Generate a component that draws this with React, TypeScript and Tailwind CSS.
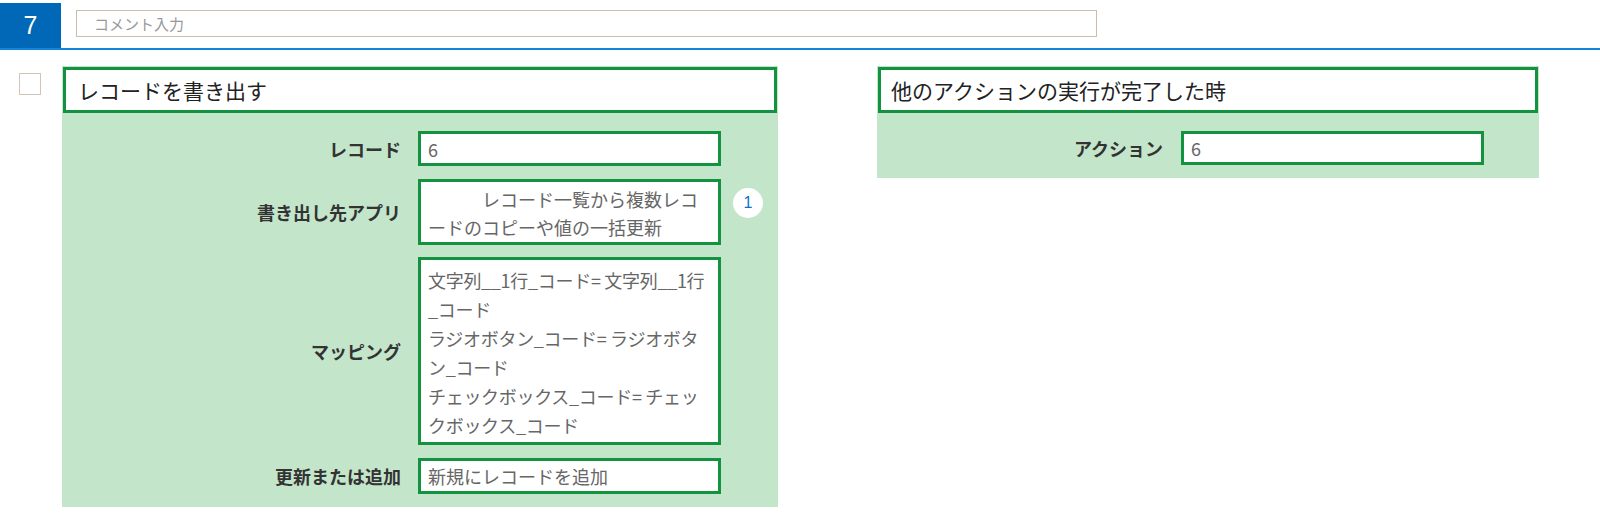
import React from "react";

function Label({ children, w }: { children: React.ReactNode; w: string }) {
  return (
    <div className={`${w} shrink-0 flex items-center justify-end text-[18px] font-bold text-[#333] leading-none`}>
      {children}
    </div>
  );
}

export default function App() {
  return (
    <div className="w-[1600px] h-[513px] bg-white font-['Noto_Sans_CJK_JP','Noto_Sans',sans-serif] text-[#333] overflow-hidden">
      {/* top bar */}
      <div className="flex items-start h-[48px]">
        <div className="mt-[3px] w-[61px] h-[45px] bg-[#0068b6] flex items-center justify-center text-white text-[25px] font-['Liberation_Sans',sans-serif] leading-none">
          7
        </div>
        <div className="ml-[15px] mt-[10px] w-[1021px] h-[27px] border border-[#cbbcab] flex items-center pl-[17px] text-[15px] text-[#999] leading-none">
          コメント入力
        </div>
      </div>
      <div className="h-[2px] bg-[#1384dc]" />

      <div className="flex items-start">
        <div className="ml-[19px] mt-[23px] w-[22px] h-[22px] border border-[#d3c4b3] bg-white shrink-0" />

        {/* left panel */}
        <div className="ml-[21px] mt-[16px] w-[716px] shrink-0 bg-[#c3e6cb] pt-px px-px pb-[13px]">
          <div className="h-[46px] bg-white border-[3px] border-[#13923f] flex items-center pl-[12px] text-[21px] text-[#222] leading-none">
            レコードを書き出す
          </div>
          <div className="mt-[18px] flex flex-col">
            <div className="flex h-[35px]">
              <Label w="w-[338px]">レコード</Label>
              <div className="ml-[17px] w-[303px] bg-white border-[3px] border-[#13923f] px-[7px] flex items-center text-[18px] text-[#666] leading-none">
                6
              </div>
            </div>
            <div className="flex mt-[13px] h-[66px] items-start">
              <Label w="w-[338px] h-full">書き出し先アプリ</Label>
              <div className="ml-[17px] w-[303px] h-full bg-white border-[3px] border-[#13923f] px-[7px] pt-[3px] text-[18px] text-[#666] leading-[28px] whitespace-pre">
                {"\u3000\u3000\u3000レコード一覧から複数レコ\nードのコピーや値の一括更新"}
              </div>
              <div className="ml-[12px] mt-[9px] w-[30px] h-[30px] rounded-full bg-white flex items-center justify-center text-[16px] text-[#0b72cc] font-['Liberation_Sans',sans-serif] leading-none">
                1
              </div>
            </div>
            <div className="flex mt-[12px] h-[188px]">
              <Label w="w-[338px]">マッピング</Label>
              <div className="ml-[17px] w-[303px] bg-white border-[3px] border-[#13923f] px-[7px] pt-[6px] text-[18px] text-[#666] leading-[29px] whitespace-pre overflow-hidden tracking-[-0.3px]">
                {"文字列__1行_コード= 文字列__1行\n_コード\nラジオボタン_コード= ラジオボタ\nン_コード\nチェックボックス_コード= チェッ\nクボックス_コード"}
              </div>
            </div>
            <div className="flex mt-[13px] h-[36px]">
              <Label w="w-[338px]">更新または追加</Label>
              <div className="ml-[17px] w-[303px] bg-white border-[3px] border-[#13923f] px-[7px] flex items-center text-[18px] text-[#666] leading-none">
                新規にレコードを追加
              </div>
            </div>
          </div>
        </div>

        {/* right panel */}
        <div className="ml-[99px] mt-[16px] w-[662px] shrink-0 bg-[#c3e6cb] pt-px px-px pb-[13px]">
          <div className="h-[46px] bg-white border-[3px] border-[#13923f] flex items-center pl-[10px] text-[21px] text-[#222] leading-none">
            他のアクションの実行が完了した時
          </div>
          <div className="mt-[18px] flex h-[34px]">
            <Label w="w-[285px]">アクション</Label>
            <div className="ml-[18px] w-[303px] bg-white border-[3px] border-[#13923f] px-[7px] flex items-center text-[18px] text-[#666] leading-none">
              6
            </div>
          </div>
        </div>
      </div>
    </div>
  );
}
